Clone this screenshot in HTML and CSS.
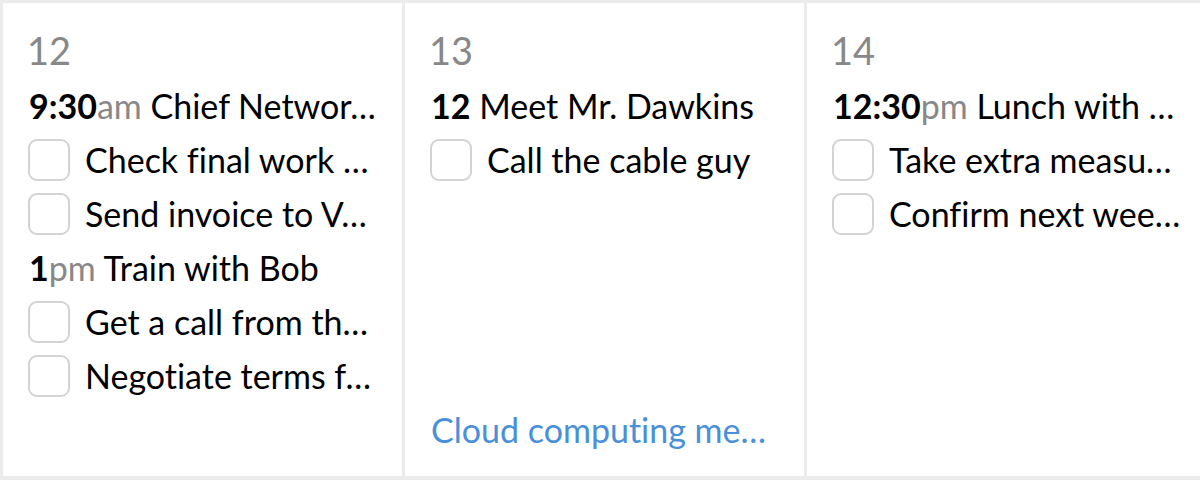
FILE: index.html
```html
<!DOCTYPE html>
<html>
<head>
<meta charset="utf-8">
<link rel="stylesheet" href="styles.css">
</head>
<body>
<div class="week">
  <div class="day">
    <div class="date">12</div>
    <div class="row event"><span class="time">9:30</span><span class="ampm">am</span> Chief Networ…</div>
    <div class="row task"><span class="box"></span><span class="label">Check final work …</span></div>
    <div class="row task"><span class="box"></span><span class="label">Send invoice to V…</span></div>
    <div class="row event"><span class="time">1</span><span class="ampm">pm</span> Train with Bob</div>
    <div class="row task"><span class="box"></span><span class="label">Get a call from th…</span></div>
    <div class="row task"><span class="box"></span><span class="label">Negotiate terms f…</span></div>
  </div>
  <div class="day">
    <div class="date">13</div>
    <div class="row event"><span class="time">12</span> Meet Mr. Dawkins</div>
    <div class="row task"><span class="box"></span><span class="label">Call the cable guy</span></div>
    <div class="spacer"></div>
    <div class="row link">Cloud computing me…</div>
  </div>
  <div class="day">
    <div class="date">14</div>
    <div class="row event"><span class="time">12:30</span><span class="ampm">pm</span> Lunch with …</div>
    <div class="row task"><span class="box"></span><span class="label">Take extra measu…</span></div>
    <div class="row task"><span class="box"></span><span class="label">Confirm next wee…</span></div>
  </div>
</div>
</body>
</html>
```
FILE: styles.css
```css
html, body {
  margin: 0;
  padding: 0;
  background: #ececec;
  overflow: hidden;
}
body {
  font-family: "Lato", "Liberation Sans", sans-serif;
  font-variant-ligatures: none;
  color: #000;
  width: 1200px;
  height: 480px;
}
.week {
  display: flex;
  gap: 3px;
  padding: 3px 0 4px 3px;
  box-sizing: border-box;
  height: 480px;
}
.day {
  flex: 0 0 399px;
  background: #fff;
  display: flex;
  flex-direction: column;
  padding: 22px 10px 19px 24px;
  box-sizing: border-box;
  min-width: 0;
}
.date {
  font-size: 38px;
  line-height: 50px;
  color: #888;
  height: 54px;
}
.row {
  font-size: 34px;
  line-height: 54px;
  height: 54px;
  white-space: nowrap;
}
.event, .link { padding-left: 2px; }
.time { font-weight: 700; }
.ampm { color: #888; }
.task {
  display: flex;
  align-items: center;
  gap: 15px;
  padding-left: 1px;
}
.box {
  flex: 0 0 42px;
  width: 42px;
  height: 42px;
  box-sizing: border-box;
  border: 2px solid #d3d3d3;
  border-radius: 9px;
}
.label {
  white-space: nowrap;
}
.spacer { flex: 1; }
.link { color: #4a90d9; }
```
